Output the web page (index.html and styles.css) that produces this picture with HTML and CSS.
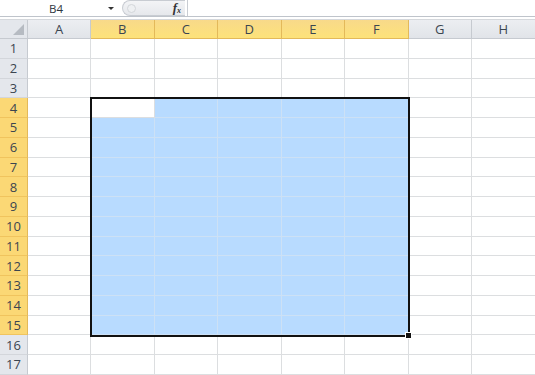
FILE: index.html
```html
<!DOCTYPE html>
<html>
<head>
<meta charset="utf-8">
<link rel="stylesheet" href="styles.css">
</head>
<body>
<div class="app">
  <div class="fbar">
    <div class="namebox"><span class="name">B4</span><span class="arrow"></span></div>
    <div class="capsule"><span class="knob"></span><span class="fx">f<sub>x</sub></span></div>
    <div class="input"></div>
  </div>
  <div class="stack">
    <div class="sheet" id="sheet"></div>
    <div class="sheet overlay"><div class="selbox"><span class="handle"></span></div></div>
  </div>
</div>
<script>
(function(){
  var s=document.getElementById('sheet');
  var cols=['A','B','C','D','E','F','G','H'];
  var h='<div class="corner"><span class="tri"></span></div>';
  cols.forEach(function(c,i){
    var sel=(i>=1&&i<=5)?' sel':'';
    h+='<div class="ch'+sel+'">'+c+'</div>';
  });
  for(var r=1;r<=17;r++){
    var rs=(r>=4&&r<=15)?' sel':'';
    h+='<div class="rh'+rs+'">'+r+'</div>';
    for(var c=0;c<8;c++){
      var inSel=r>=4&&r<=15&&c>=1&&c<=5;
      var active=r===4&&c===1;
      h+='<div class="cell'+(inSel&&!active?' hl':'')+'"></div>';
    }
  }
  s.innerHTML=h;
})();
</script>
</body>
</html>
```
FILE: styles.css
```css
html,body{margin:0;padding:0;background:#fff;}
.app{width:535px;height:375px;overflow:hidden;font-family:"Open Sans","Liberation Sans",sans-serif;color:#2e3640;}
.fbar{display:flex;height:16px;border-bottom:1px solid #bfc4cb;background:#fff;}
.namebox{width:122px;display:flex;align-items:center;}
.name{flex:1;text-align:center;font-size:11.5px;padding-left:4px;}
.arrow{width:0;height:0;border-left:3px solid transparent;border-right:3px solid transparent;border-top:3px solid #333;margin-right:8px;margin-top:1px;}
.capsule{width:63px;height:16px;box-sizing:border-box;border:1px solid #c8ccd2;border-right:none;border-radius:9px 0 0 9px;background:linear-gradient(#f3f4f6,#e6e8ec);display:flex;align-items:center;justify-content:space-between;padding:0 4px 0 4px;}
.knob{width:9px;height:9px;border-radius:50%;border:1px solid #d3d6da;background:#eef0f2;box-sizing:border-box;}
.fx{font-family:"Liberation Serif",serif;font-style:italic;font-size:13px;color:#333;font-weight:bold;line-height:1;}
.fx sub{font-size:8px;vertical-align:-1px;}
.input{flex:1;border-left:1px solid #c8ccd2;margin-left:2px;}
.stack{display:grid;margin-top:2px;}
.stack>.sheet{grid-area:1/1;}
.sheet{display:grid;grid-template-columns:28px 63px repeat(7,63.5px);grid-template-rows:19px repeat(17,19.75px);border-top:1px solid #d5d8dc;}
.overlay{border-top-color:transparent;pointer-events:none;}
.corner{background:#e4e7ec;border-right:1px solid #c6cad0;border-bottom:1px solid #c6cad0;position:relative;}
.tri{position:absolute;right:3px;bottom:3px;width:0;height:0;border-left:11px solid transparent;border-bottom:11px solid #b6bbc2;}
.ch{background:linear-gradient(#eceef2,#e1e4e9);border-right:1px solid #c6cad0;border-bottom:1px solid #c6cad0;display:flex;align-items:center;justify-content:center;font-size:13px;color:#3b4550;}
.ch.sel{background:linear-gradient(#f8d98a,#fde27a);border-right-color:#e3b95a;border-bottom-color:#e3b95a;}
.rh{background:#e4e7ec;border-right:1px solid #c6cad0;border-bottom:1px solid #d3d6db;display:flex;align-items:center;justify-content:center;font-size:13px;color:#3b4550;}
.rh.sel{background:#fbd875;border-right-color:#e3b95a;border-bottom-color:#f0c45e;}
.cell{border-right:1px solid #dcdee0;border-bottom:1px solid #dcdee0;}
.cell.hl{background:#b8dbff;border-right-color:#cde1f5;border-bottom-color:#cde1f5;}
.selbox{grid-column:3/8;grid-row:5/17;border:2px solid #111;margin:-1px -1px -2px -1px;position:relative;}
.handle{position:absolute;right:-4px;bottom:-4px;width:5px;height:5px;background:#111;border:1px solid #fff;}
```
